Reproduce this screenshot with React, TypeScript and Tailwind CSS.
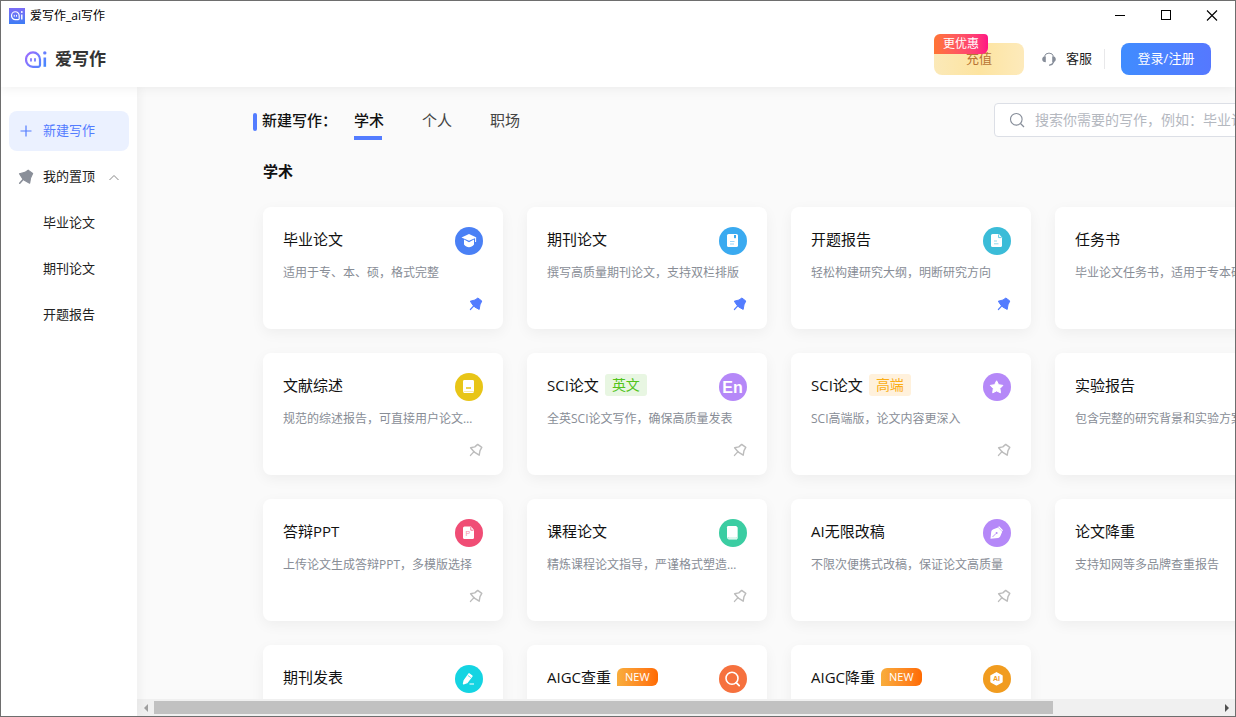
import type { ReactNode } from "react";

type Tool = {
  title: string;
  description: string;
  color: string;
  icon: ReactNode;
  tag?: "英文" | "高端" | "NEW";
  pinned?: boolean;
};

const tools: Tool[] = [
  {
    title: "毕业论文",
    description: "适用于专、本、硕，格式完整",
    color: "bg-[#4a80f5]",
    pinned: true,
    icon: (
      <>
        <path d="M14 7 21.5 10.4 14 13.8 6.5 10.4Z" fill="#fff" />
        <path d="M9 12.6v5c1.4 1.8 3.2 2.6 5 2.6s3.6-.8 5-2.6v-5l-5 2.6Z" fill="#fff" />
        <path d="M20.6 10.8v4.2" stroke="#fff" strokeWidth="1" />
      </>
    ),
  },
  {
    title: "期刊论文",
    description: "撰写高质量期刊论文，支持双栏排版",
    color: "bg-[#3aaaf0]",
    pinned: true,
    icon: (
      <>
        <rect x="8" y="7" width="11" height="13" rx="1.6" fill="#fff" />
        <path d="M15 8h2v3.5l-1-.8-1 .8Z" fill="#3aaaf0" />
        <path d="M11 14.5h4.5M11 17h4" stroke="#9bd5f8" strokeWidth="1" />
      </>
    ),
  },
  {
    title: "开题报告",
    description: "轻松构建研究大纲，明断研究方向",
    color: "bg-[#3bbcd8]",
    pinned: true,
    icon: (
      <>
        <path d="M9.5 7H16l3 3.4v8.1a1.5 1.5 0 0 1-1.5 1.5h-8A1.5 1.5 0 0 1 8 18.5v-10A1.5 1.5 0 0 1 9.5 7Z" fill="#fff" />
        <path d="M15.6 7.4v3.2h3" stroke="#3bbcd8" strokeWidth=".8" fill="none" />
        <path d="M11 14h3M11 16.8h4.5" stroke="#8fdaea" strokeWidth="1" />
      </>
    ),
  },
  {
    title: "任务书",
    description: "毕业论文任务书，适用于专本硕论文",
    color: "bg-[#4a80f5]",
    pinned: true,
    icon: <rect x="9" y="7" width="10" height="13" rx="1.5" fill="#fff" />,
  },
  {
    title: "文献综述",
    description: "规范的综述报告，可直接用户论文写作参考",
    color: "bg-[#e8c517]",
    icon: (
      <>
        <rect x="8" y="7" width="11" height="13" rx="1.4" fill="#fff" />
        <path d="M11 15h5" stroke="#e8c517" strokeWidth="1.3" />
        <path d="M8.5 18.5h10.5" stroke="#f5e69a" strokeWidth=".8" />
      </>
    ),
  },
  {
    title: "SCI论文",
    description: "全英SCI论文写作，确保高质量发表",
    color: "bg-[#b588f8]",
    tag: "英文",
    icon: (
      <text x="13.5" y="19.5" textAnchor="middle" fontSize="16" fontWeight="700" fontFamily="Liberation Sans, sans-serif" fill="#fff">
        En
      </text>
    ),
  },
  {
    title: "SCI论文",
    description: "SCI高端版，论文内容更深入",
    color: "bg-[#b588f8]",
    tag: "高端",
    icon: (
      <path
        d="m13.6 7.8 2 3.9 4.3.7-3 3.1.6 4.3-3.9-1.9-3.9 1.9.6-4.3-3-3.1 4.3-.7Z"
        fill="#fff"
        stroke="#fff"
        strokeWidth="1"
        strokeLinejoin="round"
      />
    ),
  },
  {
    title: "实验报告",
    description: "包含完整的研究背景和实验方案设计",
    color: "bg-[#3bbcd8]",
    icon: <rect x="9" y="7" width="10" height="13" rx="1.5" fill="#fff" />,
  },
  {
    title: "答辩PPT",
    description: "上传论文生成答辩PPT，多模版选择",
    color: "bg-[#f04d75]",
    icon: (
      <>
        <path d="M9.5 7.5H16l3 3.5v7.5a1.5 1.5 0 0 1-1.5 1.5h-8A1.5 1.5 0 0 1 8 18.5V9a1.5 1.5 0 0 1 1.5-1.5Z" fill="#fff" />
        <path d="M15.8 8v3.2h2.7" stroke="#f04d75" strokeWidth=".8" fill="none" />
        <text x="12.8" y="17" textAnchor="middle" fontSize="7" fontFamily="Liberation Sans, sans-serif" fill="#f58fa8">
          P
        </text>
      </>
    ),
  },
  {
    title: "课程论文",
    description: "精炼课程论文指导，严谨格式塑造学术论文",
    color: "bg-[#3bcda2]",
    icon: (
      <>
        <rect x="9.5" y="8" width="9.5" height="12" rx="1" fill="#bdeedd" />
        <rect x="8" y="7" width="10" height="11.5" rx="1.2" fill="#fff" />
        <path d="M8.5 17v1.5A1.5 1.5 0 0 0 10 20h8" stroke="#fff" strokeWidth="1" fill="none" />
      </>
    ),
  },
  {
    title: "AI无限改稿",
    description: "不限次便携式改稿，保证论文高质量",
    color: "bg-[#b588f8]",
    icon: (
      <>
        <path d="M7.5 19.8 8.2 13c.2-1.5 1-2.2 2.2-2.7l4.6-1.8 4.2 4.2-1.8 4.3c-.5 1.2-1.2 1.8-2.4 2Z" fill="#fff" />
        <path d="m15 8 1.2-.8 3.8 4-.8 1Z" fill="#fff" />
        <path d="m9.5 18 3.5-3.5" stroke="#b588f8" strokeWidth=".9" />
        <circle cx="13.6" cy="14" r="1" fill="#b588f8" />
      </>
    ),
  },
  {
    title: "论文降重",
    description: "支持知网等多品牌查重报告",
    color: "bg-[#4a80f5]",
    icon: <rect x="9" y="7" width="10" height="13" rx="1.5" fill="#fff" />,
  },
  {
    title: "期刊发表",
    description: "海量期刊资源，快速推荐发表",
    color: "bg-[#14d4e2]",
    icon: (
      <>
        <path d="m8.5 18.8.7-3.2 4.8-6.8 3 2.2-5 6.6Z" fill="#fff" stroke="#fff" strokeWidth="1.4" strokeLinejoin="round" />
        <path d="m12.8 10.4 3 2.2" stroke="#14d4e2" strokeWidth=".7" />
        <path d="M14.5 19h4.5" stroke="#fff" strokeWidth="1.2" />
      </>
    ),
  },
  {
    title: "AIGC查重",
    description: "检测论文中AI生成内容占比",
    color: "bg-[#f6713e]",
    tag: "NEW",
    icon: (
      <>
        <circle cx="13" cy="13.2" r="6" stroke="#fff" strokeWidth="1.6" fill="none" />
        <path d="m17.2 17.6 3 3" stroke="#fff" strokeWidth="1.8" strokeLinecap="round" />
      </>
    ),
  },
  {
    title: "AIGC降重",
    description: "有效降低论文AIGC疑似度",
    color: "bg-[#f19c1f]",
    tag: "NEW",
    icon: (
      <>
        <path d="m13.5 7.8 5.5 3v6l-5.5 3-5.5-3v-6Z" fill="#fff" stroke="#fff" strokeWidth="1.4" strokeLinejoin="round" />
        <text x="13.5" y="16.2" textAnchor="middle" fontSize="7" fontWeight="700" fontFamily="Liberation Sans, sans-serif" fill="#f19c1f">
          AI
        </text>
      </>
    ),
  },
];

const tagStyles = {
  英文: "h-[22px] rounded-[3px] bg-[#e8f6e2] px-[7px] text-sm text-[#52c41a]",
  高端: "h-[22px] rounded-[3px] bg-[#fff1dc] px-[7px] text-sm text-[#faad14]",
  NEW: "h-[18px] rounded-md rounded-bl-none bg-linear-to-r from-[#f8ad3c] to-[#ff6a00] px-2 text-[11px] text-white",
};

const PinIcon = ({ filled = false, className }: { filled?: boolean; className: string }) => (
  <svg viewBox="0 0 14 14" className={className} aria-hidden="true">
    <path
      d={
        filled
          ? "M8.9 1 12.8 4 11 7.8 10.2 12.4 5.6 9.9 3.8 8 1.3 4.2 6 3Z"
          : "M8.7 1.4 12.8 4.4 11 7.6 10.2 12.2 5.4 9.2 1.6 4.8 5.8 3.9Z"
      }
      fill={filled ? "currentColor" : "none"}
      stroke="currentColor"
      strokeWidth={filled ? "1" : "1.4"}
      strokeLinejoin="round"
    />
    <path d="M5 8.600 1.500 12.400" stroke="currentColor" strokeWidth="1.4" strokeLinecap="round" />
  </svg>
);

const LogoMark = ({ className, white = false }: { className: string; white?: boolean }) => {
  const paint = white ? "#fff" : "url(#logo)";
  return (
    <svg viewBox="0 0 22 17" className={className} fill="none" aria-hidden="true">
      <defs>
        <linearGradient id="logo" x1="0" y1="0" x2="22" y2="17" gradientUnits="userSpaceOnUse">
          <stop stopColor="#a56bff" />
          <stop offset="1" stopColor="#3d8bff" />
        </linearGradient>
      </defs>
      <path d="M15 8.6V14a1.800 1.800 0 0 1-1.800 1.800H8A7 7.200 0 1 1 15 8.600Z" stroke={paint} strokeWidth="2.2" />
      <path d="M6 7.8v2M10 7.8v2" stroke={paint} strokeWidth="1.8" strokeLinecap="round" />
      {/* userSpaceOnUse keeps the gradient visible on this perfectly vertical stroke */}
      <path d="M19.8 6.500v9.300" stroke={paint} strokeWidth="2.6" />
      <circle cx="19.8" cy="1.9" r="1.7" fill={paint} />
    </svg>
  );
};

const TitleBar = () => (
  <div className="relative z-30 flex h-[30px] shrink-0 items-center justify-between bg-white pl-2">
    <div className="flex items-center gap-[5px]">
      <span className="flex size-4 items-center justify-center bg-linear-to-b from-[#7b6cf6] to-[#3b7df5]">
        <LogoMark white className="w-3" />
      </span>
      <span className="text-xs text-black">爱写作_ai写作</span>
    </div>
    <div className="flex h-full">
      <button aria-label="最小化" className="flex w-[46px] items-center justify-center">
        <svg viewBox="0 0 12 12" className="size-3" shapeRendering="crispEdges">
          <path d="M1 5.5h10" stroke="#000" />
        </svg>
      </button>
      <button aria-label="最大化" className="flex w-[46px] items-center justify-center">
        <svg viewBox="0 0 12 12" className="size-3" shapeRendering="crispEdges">
          <rect x="1.5" y=".5" width="9" height="9" fill="none" stroke="#000" />
        </svg>
      </button>
      <button aria-label="关闭" className="flex w-[46px] items-center justify-center">
        <svg viewBox="0 0 12 12" className="size-3">
          <path d="m1 .5 10 10M11 .5 1 10.5" stroke="#000" strokeWidth="1.1" />
        </svg>
      </button>
    </div>
  </div>
);

const Header = () => (
  <header className="relative z-20 flex h-14 shrink-0 items-center justify-between bg-white px-6 shadow-[0_2px_10px_rgba(0,0,0,0.06)]">
    <div className="flex items-center gap-2">
      <LogoMark className="w-[22px]" />
      <span className="text-[17px] font-bold text-[#333]">爱写作</span>
    </div>
    <div className="flex items-center">
      <button className="relative h-8 w-[90px] rounded-lg bg-linear-to-r from-[#fbe9b8] via-[#fde4a0] to-[#fdeabb] text-[13px] text-[#b87333]">
        充值
        <span className="absolute -top-[9px] left-0 h-5 w-[54px] rounded-tl-md rounded-tr-sm rounded-br-md bg-linear-to-r from-[#ff7433] to-[#ff1283] text-xs leading-5 text-white">
          更优惠
        </span>
      </button>
      <a href="#service" className="ml-[18px] flex items-center gap-[10px] text-[13px] text-[#222]">
        <svg viewBox="0 0 14 14" className="size-[14px]" fill="none" aria-hidden="true">
          <path d="M2.3 4.6A4.9 4.9 0 0 1 11.7 4.6" stroke="#868d99" strokeWidth="1" />
          <path d="M3.8 4.3v6C1.4 10.3.2 9 .2 7.3s1.200-3 3.600-3ZM10.200 4.300v6c2.400 0 3.600-1.300 3.600-3s-1.200-3-3.600-3Z" fill="#868d99" />
          <path d="M11.6 10c-.6 1.800-2 2.800-4 3.200" stroke="#868d99" strokeWidth="1.3" strokeLinecap="round" />
        </svg>
        客服
      </a>
      <span className="mx-3 h-5 w-px bg-[#e8e8ea]" />
      <button className="ml-1 h-8 w-[90px] rounded-lg bg-linear-to-r from-[#3f8cff] to-[#5578ff] text-[13px] text-white">
        登录/注册
      </button>
    </div>
  </header>
);

const Sidebar = () => (
  <nav className="relative z-10 flex w-[136px] shrink-0 flex-col gap-[6px] bg-white px-2 pt-6 text-[13px] text-[#222] shadow-[2px_0_10px_rgba(0,0,0,0.05)]">
    <button className="flex h-10 items-center gap-[9px] rounded-lg bg-[#ebf1ff] px-[9px] text-[#537cff]">
      <svg viewBox="0 0 16 16" className="size-4" aria-hidden="true">
        <path d="M2.5 8h11M8 2.5v11" stroke="currentColor" strokeWidth="1.2" />
      </svg>
      新建写作
    </button>
    <button className="flex h-10 items-center gap-[9px] px-[9px]" aria-expanded="true">
      <PinIcon filled className="size-4 text-[#8a8f99]" />
      我的置顶
      <svg viewBox="0 0 12 12" className="ml-auto size-3" fill="none" aria-hidden="true">
        <path d="M1.5 9 6 4.5 10.5 9" stroke="#888" strokeWidth="1" />
      </svg>
    </button>
    {["毕业论文", "期刊论文", "开题报告"].map((item) => (
      <a key={item} href="#pinned" className="flex h-10 items-center pl-[34px]">
        {item}
      </a>
    ))}
  </nav>
);

const Toolbar = () => (
  <div className="flex items-start justify-between">
    <div className="flex items-start pt-[5px] text-[15px] leading-6">
      <span className="mt-[5px] mr-[5px] h-[18px] w-1 rounded-[2px] bg-[#537cff]" />
      <h1 className="mr-[17px] font-medium text-[#111]">新建写作：</h1>
      <div className="flex gap-[38px]">
        <button className="flex flex-col gap-1 font-medium text-[#111]">
          学术
          <span className="h-1 w-7 bg-[#537cff]" />
        </button>
        <button className="self-start text-[#444]">个人</button>
        <button className="self-start text-[#444]">职场</button>
      </div>
    </div>
    <label className="flex h-[34px] w-[301px] items-center gap-[10px] rounded border border-[#dcdfe6] bg-white px-[14px]">
      <svg viewBox="0 0 16 16" className="size-4 shrink-0" fill="none" aria-hidden="true">
        <circle cx="7.3" cy="7.3" r="5.8" stroke="#868d99" strokeWidth="1.1" />
        <path d="m11.5 11.5 3.5 3.5" stroke="#868d99" strokeWidth="1.2" />
      </svg>
      <input
        type="text"
        aria-label="搜索"
        placeholder="搜索你需要的写作，例如：毕业论文"
        className="min-w-0 flex-1 text-sm outline-none placeholder:text-[#b4b8bf]"
      />
    </label>
  </div>
);

const ToolCard = ({ title, description, color, icon, tag, pinned }: Tool) => (
  <article className="rounded-lg bg-white px-5 pt-5 pb-[18px] shadow-[0_4px_14px_rgba(0,0,0,0.05)]">
    <div className="flex h-7 items-start justify-between">
      <div className="flex h-6 items-center gap-[6px]">
        <h3 className="text-[15px] text-[#111]">{title}</h3>
        {tag && <span className={`flex items-center ${tagStyles[tag]}`}>{tag}</span>}
      </div>
      <svg viewBox="0 0 28 28" className={`size-7 rounded-full ${color}`} aria-hidden="true">
        {icon}
      </svg>
    </div>
    <p className="mt-2 truncate text-xs leading-5 text-[#888d96]">{description}</p>
    <button aria-label="置顶" className="mt-[14px] ml-auto block">
      <PinIcon filled={pinned} className={pinned ? "size-[14px] text-[#537cff]" : "size-[14px] text-[#bcbcbc]"} />
    </button>
  </article>
);

const ScrollBar = () => (
  <div className="flex h-[17px] shrink-0 items-center bg-[#f0f0f0]">
    <span className="flex w-[17px] justify-center">
      <svg viewBox="0 0 4 8" className="h-2 w-1">
        <path d="M4 0v8L0 4Z" fill="#a0a0a0" />
      </svg>
    </span>
    <div className="flex-1">
      <div className="h-[13px] w-[84.5%] bg-[#c1c1c1]" />
    </div>
    <span className="flex w-[17px] justify-center">
      <svg viewBox="0 0 4 8" className="h-2 w-1">
        <path d="M0 0v8L4 4Z" fill="#505050" />
      </svg>
    </span>
  </div>
);

export default function App() {
  return (
    <div className="flex h-screen flex-col overflow-hidden border border-[#6e6e6e] bg-white font-['Open_Sans','Noto_Sans_CJK_SC',sans-serif]">
      <TitleBar />
      <Header />
      <div className="flex min-h-0 flex-1">
        <Sidebar />
        <div className="flex min-w-0 flex-1 flex-col bg-[#fafafa]">
          <main className="min-h-0 flex-1 overflow-hidden pt-4 pl-[116px]">
            <div className="w-max">
              <Toolbar />
              <div className="pl-[10px]">
                <h2 className="mt-[19px] text-[15px] leading-6 font-bold text-[#111]">学术</h2>
                <div className="mt-6 grid grid-cols-[repeat(4,240px)] gap-6">
                  {tools.map((tool, index) => (
                    <ToolCard key={index} {...tool} />
                  ))}
                </div>
              </div>
            </div>
          </main>
          <ScrollBar />
        </div>
      </div>
    </div>
  );
}
